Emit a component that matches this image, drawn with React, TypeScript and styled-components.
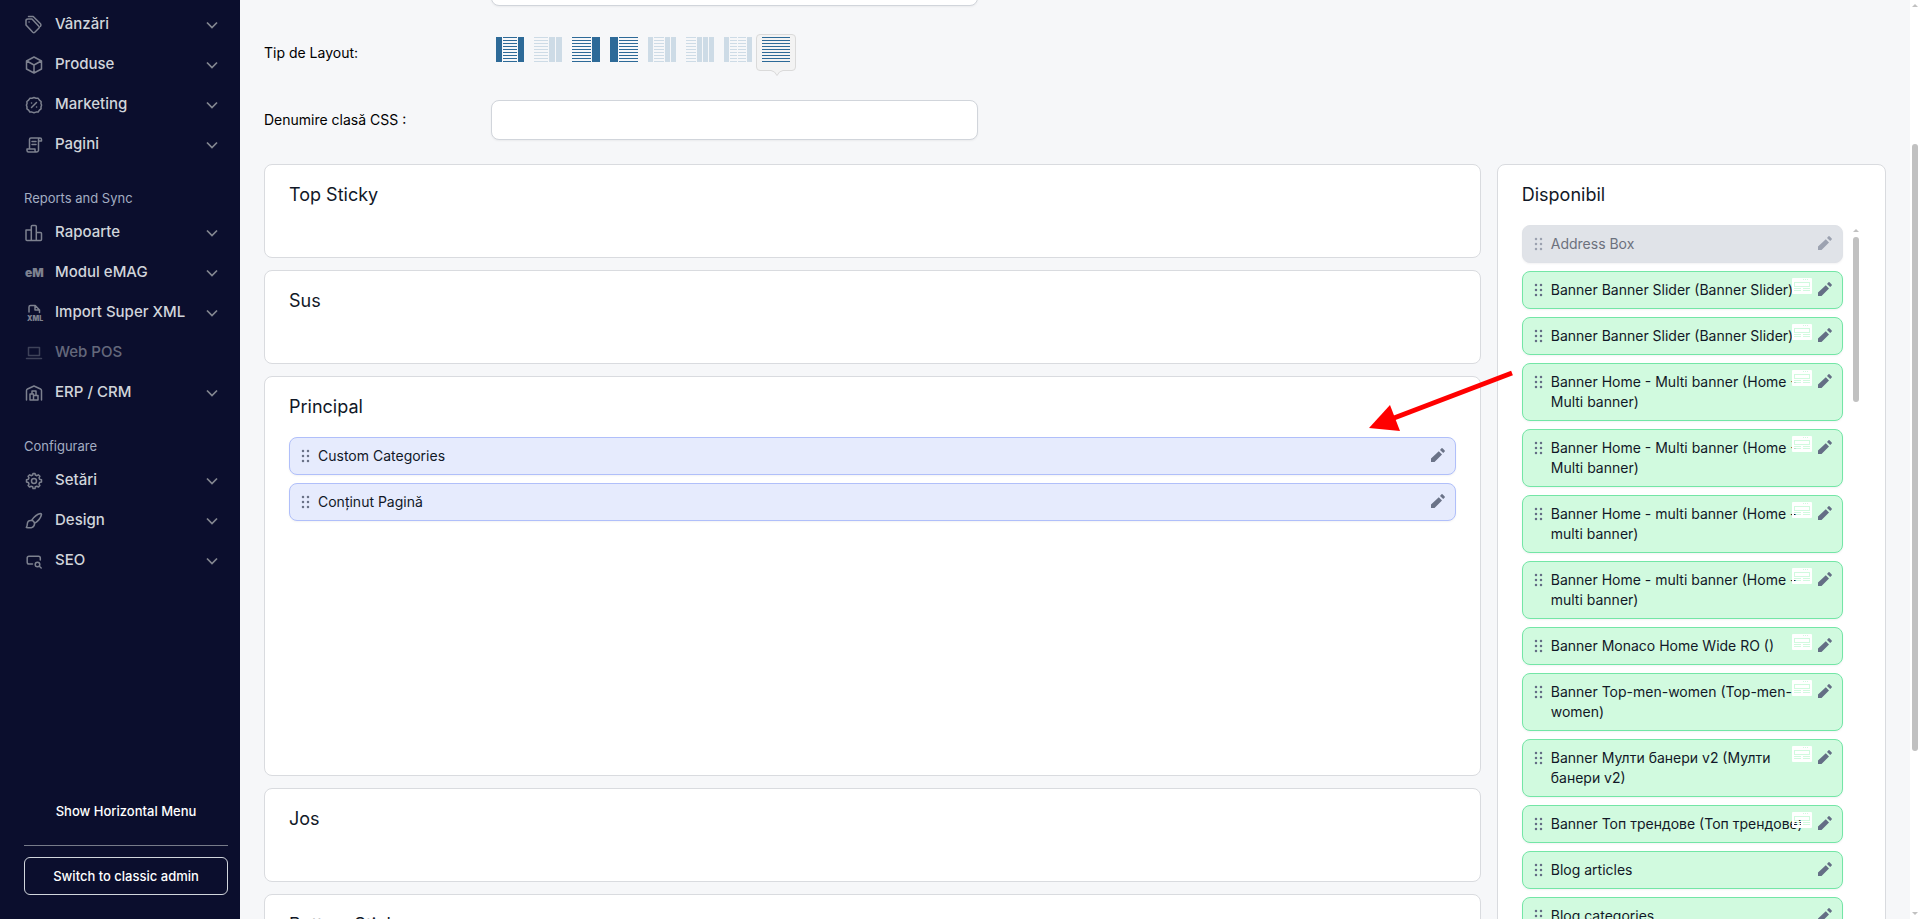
import React from "react";
import styled, { createGlobalStyle, css } from "styled-components";

const GlobalStyle = createGlobalStyle`
  *, *::before, *::after { box-sizing: border-box; }
  body {
    margin: 0;
    background: #f6f7f9;
    color: #111827;
    font-family: Inter, "Liberation Sans", sans-serif;
    font-size: 14px;
    line-height: 20px;
  }
  button, input { font: inherit; color: inherit; }
`;

/* ---------- shell ---------- */

const Shell = styled.div`
  display: flex;
  height: 100vh;
  overflow: hidden;
`;

const Sidebar = styled.aside`
  display: flex;
  flex-direction: column;
  flex: 0 0 240px;
  padding: 4px 12px 24px 24px;
  background: #0b0e2d;
`;

const Nav = styled.nav`
  flex: 1;
  min-height: 0;
`;

const NavHeading = styled.h2`
  margin: 0;
  padding: 24px 0 4px;
  font-size: 13px;
  line-height: 20px;
  font-weight: 400;
  color: #a3adc2;
`;

const NavLink = styled.a<{ $muted?: boolean }>`
  display: flex;
  align-items: center;
  height: 40px;
  padding-right: 10px;
  font-size: 15px;
  line-height: 20px;
  font-weight: 500;
  color: #d1d5db;
  text-decoration: none;
  opacity: ${(p) => (p.$muted ? 0.45 : 1)};
`;

const NavIcon = styled.svg`
  flex: none;
  width: 20px;
  height: 20px;
  margin-right: 11px;
  margin-top: 1px;
  fill: none;
  stroke: #7d818f;
  stroke-width: 1.5;
  stroke-linejoin: round;
  stroke-linecap: round;
  text {
    font-family: Inter, sans-serif;
    font-weight: 900;
    fill: #7d818f;
    stroke: none;
  }
`;

const NavText = styled.span`
  flex: 1;
  white-space: nowrap;
`;

const ChevronSvg = styled.svg`
  width: 12px;
  height: 8px;
  margin-top: 2px;
  fill: none;
  stroke: #83868f;
  stroke-width: 1.75;
`;

const SidebarFooter = styled.div`
  display: flex;
  flex-direction: column;
`;

const MenuToggle = styled.button`
  padding: 10px 0;
  border: 0;
  background: none;
  color: #fff;
  font-size: 13px;
  line-height: 20px;
  font-weight: 500;
`;

const FooterRule = styled.hr`
  width: 100%;
  height: 1px;
  margin: 14px 0 11px;
  border: 0;
  background: #777b89;
`;

const ClassicButton = styled.button`
  height: 38px;
  border: 1px solid #d1d5db;
  border-radius: 6px;
  background: none;
  color: #fff;
  font-size: 13px;
  line-height: 20px;
  font-weight: 500;
`;

/* ---------- content ---------- */

const Content = styled.main`
  flex: 1;
  min-width: 0;
  padding: 0 24px;
`;

const Form = styled.form`
  display: flex;
  flex-direction: column;
  gap: 28px;
  margin-top: -34px;
  margin-bottom: 24px;
  color: #000;
`;

const FormRow = styled.div`
  display: flex;
  align-items: center;
  min-height: 38px;
`;

const FormLabel = styled.label`
  flex: 0 0 14%;
`;

const TextInput = styled.input`
  width: 30%;
  height: 40px;
  padding: 0 12px;
  border: 1px solid #d1d5db;
  border-radius: 8px;
  background: #fff;
  box-shadow: 0 1px 2px rgba(0, 0, 0, 0.05);
  outline: none;
`;

const LayoutPicker = styled.div`
  display: flex;
  height: 38px;
  margin-left: -1px;
`;

const LayoutOption = styled.button<{ $selected?: boolean }>`
  position: relative;
  display: flex;
  align-items: flex-start;
  width: 40px;
  height: 37px;
  margin-right: -2px;
  padding: 2px 5px;
  border: 1px solid transparent;
  border-radius: 4px;
  background: none;
  ${(p) =>
    p.$selected &&
    css`
      border-color: #dadada;
      background: #f3f3f3;
    `}
`;

const LayoutSvg = styled.svg<{ $off?: boolean }>`
  flex: none;
  display: block;
  fill: ${(p) => (p.$off ? "#cddbe6" : "#2d6a98")};
  shape-rendering: crispEdges;
`;

const Pointer = styled.svg`
  position: absolute;
  top: 35px;
  left: 14px;
`;

const Columns = styled.div`
  position: relative;
  display: flex;
  justify-content: space-between;
  align-items: flex-start;
`;

const Zones = styled.div`
  display: flex;
  flex-direction: column;
  gap: 12px;
  width: 75%;
`;

const Panel = styled.section<{ $tall?: boolean }>`
  min-height: ${(p) => (p.$tall ? 400 : 94)}px;
  padding: 16px 24px;
  border: 1px solid #d9dbdf;
  border-radius: 8px;
  background: #fff;
`;

const AvailablePanel = styled(Panel)`
  width: 24%;
`;

const PanelTitle = styled.h3`
  margin: 0 0 16px;
  font-size: 18px;
  line-height: 28px;
  font-weight: 400;
`;

const ModuleList = styled.ul`
  display: flex;
  flex-direction: column;
  flex: 1;
  gap: 8px;
  min-width: 0;
  margin: 0;
  padding: 0;
  list-style: none;
`;

type Tone = "blue" | "green" | "off";

const tones: Record<Tone, { bg: string; border: string; text: string; icon: string }> = {
  blue: { bg: "#e6ebfd", border: "#b0bffa", text: "#111827", icon: "#6b7388" },
  green: { bg: "#d1fadf", border: "#73e6a6", text: "#111827", icon: "#646e85" },
  off: { bg: "#e0e3e8", border: "#dfe2e7", text: "#6c717d", icon: "#9ca2b0" },
};

const Module = styled.li<{ $tone: Tone }>`
  position: relative;
  display: flex;
  align-items: flex-start;
  gap: 8px;
  padding: 8px 10px 8px 12px;
  border: 1px solid ${(p) => tones[p.$tone].border};
  border-radius: 8px;
  background: ${(p) => tones[p.$tone].bg};
  box-shadow: 0 1px 2px rgba(16, 24, 40, 0.05);
  color: ${(p) => tones[p.$tone].text};
  fill: ${(p) => tones[p.$tone].icon};
`;

const ModuleName = styled.span`
  flex: 1;
  min-width: 0;
`;

const Grip = styled.svg`
  flex: none;
  width: 8px;
  height: 20px;
  overflow: visible;
`;

const EditButton = styled.button`
  flex: none;
  width: 14px;
  height: 20px;
  padding: 2px 0 4px;
  border: 0;
  background: none;
  svg { display: block; }
`;

const WidgetBadge = styled.svg`
  position: absolute;
  top: 6px;
  right: 30px;
  fill: #fff;
`;

const ScrollArea = styled.div`
  display: flex;
  gap: 8px;
`;

const ListScrollbar = styled.div`
  width: 10px;
  padding: 4px 2px 0;
`;

const PageScrollbar = styled.div`
  display: flex;
  flex: 0 0 10px;
  flex-direction: column;
  align-items: center;
  padding: 4px 2px;
  background: #fff;
`;

const Caret = styled.svg`
  display: block;
  fill: #c1c1c1;
`;

const ListThumb = styled.div`
  height: 165px;
  margin-top: 5px;
  border-radius: 3px;
  background: #c1c1c1;
`;

const PageTrack = styled.div`
  flex: 1;
  width: 6px;
  padding-top: 137px;
`;

const PageThumb = styled.div`
  height: 79%;
  border-radius: 3px;
  background: #c1c1c1;
`;

const ArrowMark = styled.svg`
  position: absolute;
  top: 204px;
  right: 372px;
  pointer-events: none;
`;

/* ---------- drawings ---------- */

const icons: Record<string, React.ReactNode> = {
  sales: (
    <>
      <path d="M2 5v5l6.800 7.200q1 1 2 0l4-4q1-1 0-2L8 4H4Q2 4 2 5.500Z" />
      <path d="M4.500 1.500h4.700l7.300 7.300q1 1.200 0 2.600" />
      <path d="M5 7h.1" />
    </>
  ),
  products: (
    <path d="M10 2 17.500 6v8L10 18 2.500 14V6ZM2.800 6 10 10l7.200-4M10 10v8" />
  ),
  marketing: (
    <>
      <path d="M10 2.500 12 3.200l2.200.1 1.200 1.800 1.700 1.400-.1 2.200.6 1.300-.6 2 .1 1.900-1.700 1.300-1.200 1.800-2.200.1-2 .7-2-.7-2.200-.1-1.200-1.800L2.900 13.900 3 12l-.6-2L3 8.700l-.1-2.200 1.700-1.400 1.200-1.800L8 3.200Z" />
      <path d="m7.500 12.500 5-5M7.500 8h.1M12.500 12h.1" />
    </>
  ),
  pages: (
    <>
      <path d="M5.500 14V4.500Q5.500 3 7 3h9q1.500 0 1.500 1.500V6h-3M14.500 14V4.500Q14.500 3 16 3M3 14h8v1.500q0 1.500 1.500 1.500t2-1.500V6M3 14v1.500Q3 17 4.500 17h8" />
      <path d="M8 6.500h4M8 9.500h4" />
    </>
  ),
  reports: <path d="M2 7h5.300v10.500H3q-1 0-1-1ZM7.300 3.500q0-1 1-1h3q1 0 1 1v14h-5ZM12.300 9.500h4.200q1 0 1 1v6q0 1-1 1h-4.200Z" />,
  emag: (
    <text x="1" y="14" fontSize="12">eM</text>
  ),
  xml: (
    <>
      <path d="M5 9V4q0-1.500 1.500-1.500h4.700L15.500 7v2.500M11 2.800V7h4.300" />
      <text x="3" y="18" fontSize="7">XML</text>
    </>
  ),
  pos: <path d="M4.500 4.500h11v8h-11ZM2.500 15.500h15" />,
  erp: (
    <path d="M2.500 17V7.500Q2.500 6.500 3.500 6L10 3l6.500 3q1 .500 1 1.500V17M6 17v-6h3.500v6ZM9.500 17v-4.500H14V17ZM8 11V8h4v4.500M6 17h8" />
  ),
  settings: (
    <>
      <path d="M8.700 4 9 2.500h2l.3 1.500 1.600.7L14.300 3.800l1.600 1.500-.9 1.500.6 1.500 1.900.4v2.400l-1.900.5-.6 1.500.9 1.400-1.600 1.600-1.400-.9-1.600.6L11 17.500H9l-.3-1.700-1.600-.6-1.400.9-1.600-1.600.9-1.400-.6-1.500-1.900-.5V8.700l1.900-.4.6-1.500-.9-1.500 1.600-1.500 1.400.9Z" />
      <circle cx="10" cy="10" r="2.500" />
    </>
  ),
  design: (
    <path d="M7.500 9.500q4-6 9-7 1 0 1 1-1 5-7 9M7.500 9.500q2.500 0 3 3M7.500 9.500Q3.500 9 3.300 13q0 2-1 3.500 4.200.8 6-.2 2.400-1.300 2.200-3.800" />
  ),
  seo: (
    <>
      <path d="M8.500 13H5q-1.800 0-1.800-1.800V7Q3.200 5.200 5 5.200h9.500q1.800 0 1.800 1.800v2" />
      <circle cx="13.500" cy="13.500" r="2.300" />
      <path d="m15.300 15.300 1.900 1.700" />
    </>
  ),
};

const Chevron = () => (
  <ChevronSvg viewBox="0 0 12 8" aria-hidden="true">
    <path d="m1 1.500 5 5 5-5" />
  </ChevronSvg>
);

/* Each segment is [x, width, kind]: "b" is a solid bar, "l" a stack of text lines. */
type Segment = [number, number, "b" | "l"];
type LayoutDef = { name: string; off?: boolean; selected?: boolean; segments: Segment[] };

const layouts: LayoutDef[] = [
  { name: "Three columns", segments: [[0, 6, "b"], [7, 14, "l"], [22, 6, "b"]] },
  { name: "Content and two right columns", off: true, segments: [[0, 14, "l"], [15, 6, "b"], [22, 6, "b"]] },
  { name: "Right column", segments: [[0, 19, "l"], [20, 8, "b"]] },
  { name: "Left column", segments: [[0, 8, "b"], [9, 19, "l"]] },
  { name: "Left and two right columns", off: true, segments: [[0, 5, "b"], [6, 10, "l"], [17, 5, "b"], [23, 5, "b"]] },
  { name: "Three right columns", off: true, segments: [[0, 10, "l"], [11, 5, "b"], [17, 5, "b"], [23, 5, "b"]] },
  { name: "Split content", off: true, segments: [[0, 5, "b"], [6, 7, "l"], [14, 8, "l"], [23, 5, "b"]] },
  { name: "Full width", selected: true, segments: [[0, 28, "l"]] },
];

const LayoutIcon = ({ off, segments }: { off?: boolean; segments: Segment[] }) => (
  <LayoutSvg $off={off} width="28" height="25" viewBox="0 0 28 25" aria-hidden="true">
    {segments.map(([x, w, kind]) =>
      kind === "b" ? (
        <rect key={x} x={x} width={w} height="25" />
      ) : (
        Array.from({ length: 9 }, (_, i) => <rect key={`${x}-${i}`} x={x} y={i * 3} width={w} height="1" />)
      )
    )}
  </LayoutSvg>
);

const ModuleRow = ({ name, tone, badge }: { name: string; tone: Tone; badge?: boolean }) => (
  <Module $tone={tone}>
    <Grip viewBox="0 0 8 20" aria-hidden="true">
      {[5, 10, 15].map((y) => (
        <React.Fragment key={y}>
          <circle cx="1" cy={y} r="1.250" />
          <circle cx="6" cy={y} r="1.250" />
        </React.Fragment>
      ))}
    </Grip>
    <ModuleName>{name}</ModuleName>
    {badge && (
      <WidgetBadge width="20" height="16" viewBox="0 0 20 16" aria-hidden="true">
        <path
          fillRule="evenodd"
          d="M1 0h18q1 0 1 1v14q0 1-1 1H1q-1 0-1-1V1q0-1 1-1ZM11 1v1h1V1ZM13 1v1h1V1ZM15 1v1h1V1ZM2 4v5h16V4ZM3 5h14v3H3ZM2 10v1h7v-1ZM11 10v1h7v-1ZM2 12v1h7v-1ZM11 12v1h7v-1Z"
        />
      </WidgetBadge>
    )}
    <EditButton type="button" aria-label={`Edit ${name}`} disabled={tone === "off"}>
      <svg width="14" height="14" viewBox="0 0 14 14" aria-hidden="true">
        <path d="M0 14v-3.500L7.800 3.200 11 6.400 3.500 14ZM9 1.900 10.500.3q.5-.5 1 0l2.200 2.200q.5.500 0 1L12.200 5Z" />
      </svg>
    </EditButton>
  </Module>
);

/* ---------- data ---------- */

const navGroups: { heading?: string; items: { icon: string; text: string; muted?: boolean }[] }[] = [
  {
    items: [
      { icon: "sales", text: "Vânzări" },
      { icon: "products", text: "Produse" },
      { icon: "marketing", text: "Marketing" },
      { icon: "pages", text: "Pagini" },
    ],
  },
  {
    heading: "Reports and Sync",
    items: [
      { icon: "reports", text: "Rapoarte" },
      { icon: "emag", text: "Modul eMAG" },
      { icon: "xml", text: "Import Super XML" },
      { icon: "pos", text: "Web POS", muted: true },
      { icon: "erp", text: "ERP / CRM" },
    ],
  },
  {
    heading: "Configurare",
    items: [
      { icon: "settings", text: "Setări" },
      { icon: "design", text: "Design" },
      { icon: "seo", text: "SEO" },
    ],
  },
];

const zones: { title: string; tall?: boolean; modules?: string[] }[] = [
  { title: "Top Sticky" },
  { title: "Sus" },
  { title: "Principal", tall: true, modules: ["Custom Categories", "Conținut Pagină"] },
  { title: "Jos" },
  { title: "Bottom Sticky" },
];

const available: { name: string; tone: Tone; badge?: boolean }[] = [
  { name: "Address Box", tone: "off" },
  { name: "Banner Banner Slider (Banner Slider)", tone: "green", badge: true },
  { name: "Banner Banner Slider (Banner Slider)", tone: "green", badge: true },
  { name: "Banner Home - Multi banner (Home - Multi banner)", tone: "green", badge: true },
  { name: "Banner Home - Multi banner (Home - Multi banner)", tone: "green", badge: true },
  { name: "Banner Home - multi banner (Home - multi banner)", tone: "green", badge: true },
  { name: "Banner Home - multi banner (Home - multi banner)", tone: "green", badge: true },
  { name: "Banner Monaco Home Wide RO ()", tone: "green", badge: true },
  { name: "Banner Top-men-women (Top-men-women)", tone: "green", badge: true },
  { name: "Banner Мулти банери v2 (Мулти банери v2)", tone: "green", badge: true },
  { name: "Banner Топ трендове (Топ трендове)", tone: "green", badge: true },
  { name: "Blog articles", tone: "green" },
  { name: "Blog categories", tone: "green" },
];

export default function App() {
  return (
    <>
      <GlobalStyle />
      <Shell>
        <Sidebar>
          <Nav>
            {navGroups.map((group, i) => (
              <React.Fragment key={i}>
                {group.heading && <NavHeading>{group.heading}</NavHeading>}
                {group.items.map((item) => (
                  <NavLink key={item.text} href="#" $muted={item.muted}>
                    <NavIcon viewBox="0 0 20 20" aria-hidden="true">{icons[item.icon]}</NavIcon>
                    <NavText>{item.text}</NavText>
                    {!item.muted && <Chevron />}
                  </NavLink>
                ))}
              </React.Fragment>
            ))}
          </Nav>
          <SidebarFooter>
            <MenuToggle type="button">Show Horizontal Menu</MenuToggle>
            <FooterRule />
            <ClassicButton type="button">Switch to classic admin</ClassicButton>
          </SidebarFooter>
        </Sidebar>

        <Content>
          <Form>
            <FormRow>
              <FormLabel as="span" />
              <TextInput type="text" aria-label="Nume" />
            </FormRow>
            <FormRow>
              <FormLabel as="span" id="layout-label">Tip de Layout:</FormLabel>
              <LayoutPicker role="group" aria-labelledby="layout-label">
                {layouts.map((l) => (
                  <LayoutOption
                    key={l.name}
                    type="button"
                    aria-label={l.name}
                    aria-pressed={!!l.selected}
                    disabled={l.off}
                    $selected={l.selected}
                  >
                    <LayoutIcon off={l.off} segments={l.segments} />
                    {l.selected && (
                      <Pointer width="12" height="7" viewBox="0 0 12 7" aria-hidden="true">
                        <path d="M0 .5Q4 1 6 5.500 8 1 12 .5V0H0Z" fill="#f3f3f3" />
                        <path d="M0 .5Q4 1 6 5.500 8 1 12 .5" fill="none" stroke="#dadada" />
                      </Pointer>
                    )}
                  </LayoutOption>
                ))}
              </LayoutPicker>
            </FormRow>
            <FormRow>
              <FormLabel htmlFor="css-class">Denumire clasă CSS :</FormLabel>
              <TextInput id="css-class" type="text" />
            </FormRow>
          </Form>

          <Columns>
            <Zones>
              {zones.map((zone) => (
                <Panel key={zone.title} $tall={zone.tall}>
                  <PanelTitle>{zone.title}</PanelTitle>
                  {zone.modules && (
                    <ModuleList>
                      {zone.modules.map((m) => (
                        <ModuleRow key={m} name={m} tone="blue" />
                      ))}
                    </ModuleList>
                  )}
                </Panel>
              ))}
            </Zones>

            <AvailablePanel>
              <PanelTitle>Disponibil</PanelTitle>
              <ScrollArea>
                <ModuleList>
                  {available.map((m, i) => (
                    <ModuleRow key={i} {...m} />
                  ))}
                </ModuleList>
                <ListScrollbar aria-hidden="true">
                  <Caret width="6" height="3" viewBox="0 0 6 3"><path d="M0 3 3 0l3 3Z" /></Caret>
                  <ListThumb />
                </ListScrollbar>
              </ScrollArea>
            </AvailablePanel>

            <ArrowMark width="146" height="66" viewBox="0 0 146 66" aria-hidden="true">
              <path d="M144 5 26 50" stroke="#f00" strokeWidth="5" />
              <path d="M1 60 22 37 32 63Z" fill="#f00" />
            </ArrowMark>
          </Columns>
        </Content>

        <PageScrollbar aria-hidden="true">
          <Caret width="6" height="3" viewBox="0 0 6 3"><path d="M0 3 3 0l3 3Z" /></Caret>
          <PageTrack>
            <PageThumb />
          </PageTrack>
          <Caret width="6" height="3" viewBox="0 0 6 3"><path d="M0 0 3 3l3-3Z" /></Caret>
        </PageScrollbar>
      </Shell>
    </>
  );
}
